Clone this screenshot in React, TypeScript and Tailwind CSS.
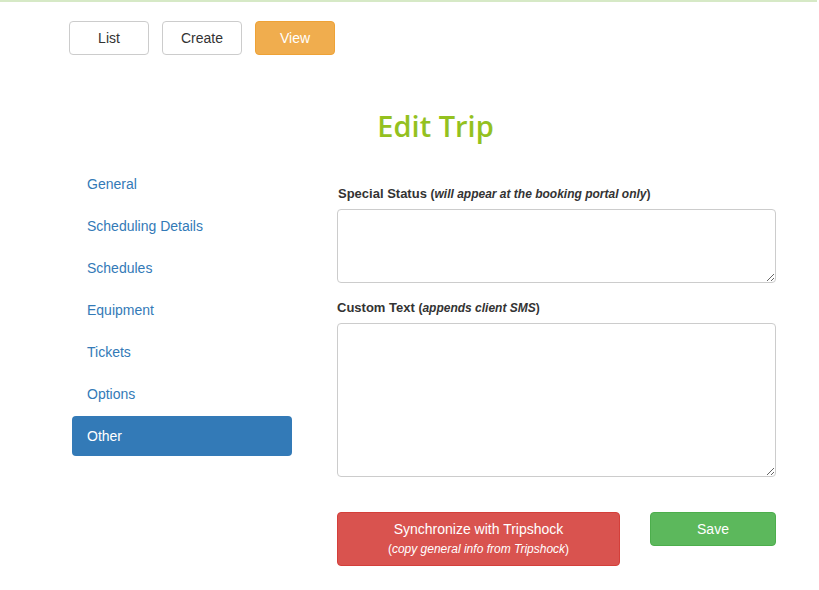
import React from "react";

const navItems = [
  "General",
  "Scheduling Details",
  "Schedules",
  "Equipment",
  "Tickets",
  "Options",
  "Other",
];

const App = () => {
  return (
    <div className="min-h-[590px] bg-white font-['Liberation_Sans',Arial,sans-serif] text-[14px] text-[#333]">
      <div className="h-[2px] w-[817px] bg-[#d6e9c6]" />

      <div className="flex gap-[13px] pl-[69px] pt-[19px]">
        <button className="h-[34px] w-[80px] rounded border border-[#ccc] bg-white text-[14px] text-[#333]">
          List
        </button>
        <button className="h-[34px] w-[80px] rounded border border-[#ccc] bg-white text-[14px] text-[#333]">
          Create
        </button>
        <button className="h-[34px] w-[80px] rounded border border-[#eea236] bg-[#f0ad4e] text-[14px] text-white">
          View
        </button>
      </div>

      <h1 className="mt-[51px] pl-[52px] text-center font-['Open_Sans',sans-serif] text-[29px] font-semibold leading-[40px] text-[#94c11f]">
        Edit Trip
      </h1>

      <div className="mt-[18px] flex">
        <ul className="ml-[72px] flex w-[220px] flex-col gap-[2px]">
          {navItems.map((item) => (
            <li key={item}>
              <a
                href="#"
                className={
                  item === "Other"
                    ? "block h-[40px] rounded px-[15px] py-[10px] leading-[20px] text-white bg-[#337ab7]"
                    : "block h-[40px] rounded px-[15px] py-[10px] leading-[20px] text-[#337ab7]"
                }
              >
                {item}
              </a>
            </li>
          ))}
        </ul>

        <div className="ml-[45px] w-[439px] pt-[20px]">
          <div className="mb-[15px]">
            <label className="mb-[5px] block pl-[1px] text-[13px] font-bold leading-[19px]">
              Special Status{" "}
              <span className="text-[12px]">
                (<i>will appear at the booking portal only</i>)
              </span>
            </label>
            <textarea className="block h-[74px] w-full rounded border border-[#ccc] bg-white" />
          </div>
          <div>
            <label className="mb-[5px] block text-[13px] font-bold leading-[19px]">
              Custom Text{" "}
              <span className="text-[12px]">
                (<i>appends client SMS</i>)
              </span>
            </label>
            <textarea className="block h-[154px] w-full rounded border border-[#ccc] bg-white" />
          </div>

          <div className="mt-[35px] flex items-start justify-between">
            <button className="flex h-[54px] w-[283px] flex-col items-center justify-center rounded border border-[#d43f3a] bg-[#d9534f] pb-[1px] text-white">
              <span className="text-[14px] leading-[20px]">Synchronize with Tripshock</span>
              <span className="text-[12px] leading-[20px]">
                (<i>copy general info from Tripshock</i>)
              </span>
            </button>
            <button className="h-[34px] w-[126px] rounded border border-[#4cae4c] bg-[#5cb85c] text-[14px] text-white">
              Save
            </button>
          </div>
        </div>
      </div>
    </div>
  );
};

export default App;
